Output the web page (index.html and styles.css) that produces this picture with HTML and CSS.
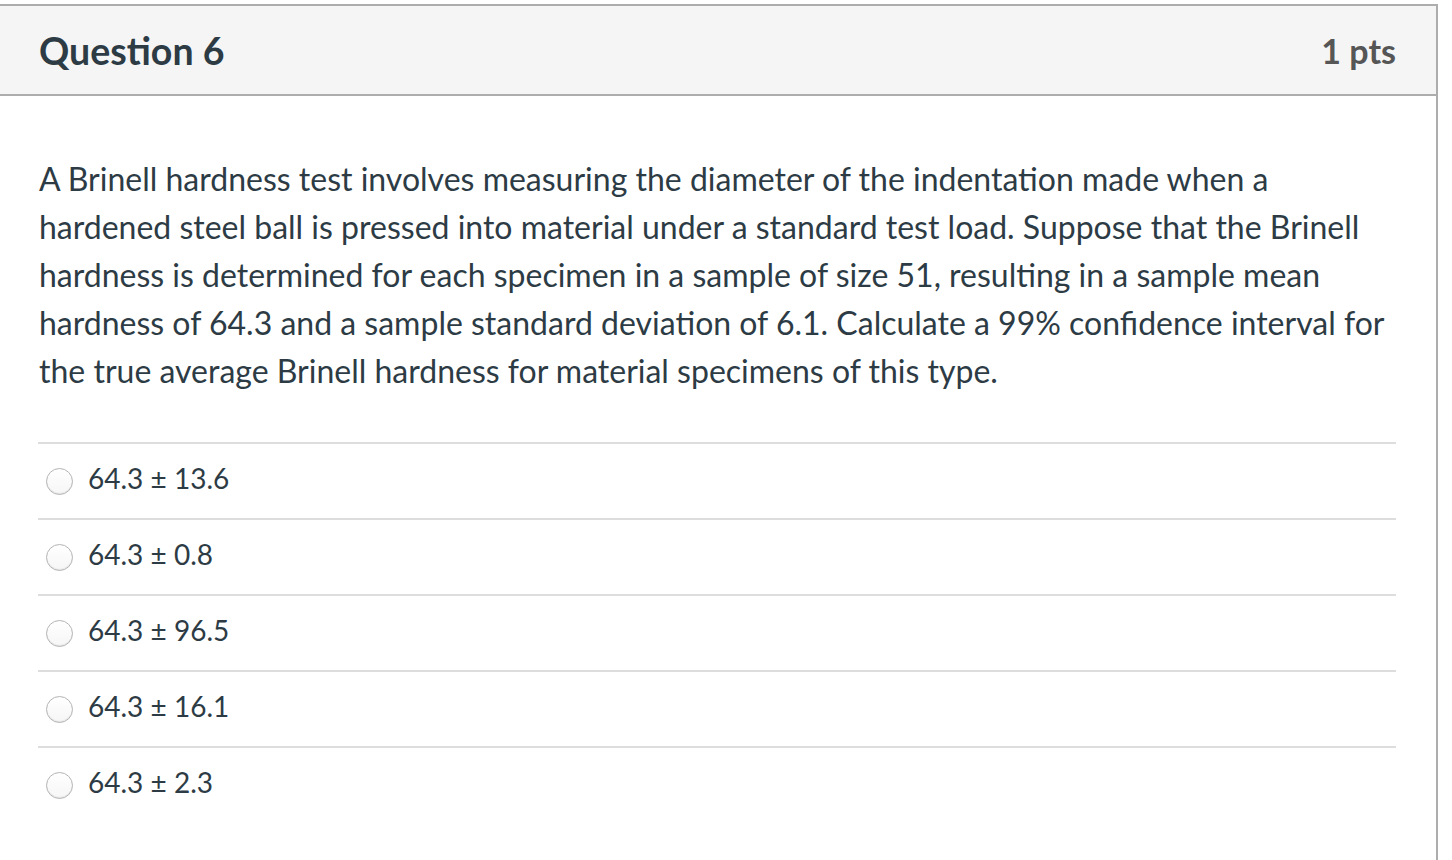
FILE: index.html
```html
<!DOCTYPE html>
<html>
<head>
<meta charset="utf-8">
<link rel="stylesheet" href="styles.css">
</head>
<body>
<div class="question">
  <div class="header">
    <h2 class="title">Question 6</h2>
    <span class="points">1 pts</span>
  </div>
  <div class="content">
    <p class="text">A Brinell hardness test involves measuring the diameter of the indentation made when a hardened steel ball is pressed into material under a standard test load. Suppose that the Brinell hardness is determined for each specimen in a sample of size 51, resulting in a sample mean hardness of 64.3 and a sample standard deviation of 6.1. Calculate a 99% confidence interval for the true average Brinell hardness for material specimens of this type.</p>
    <div class="answers">
      <label class="answer"><span class="radio"></span><span class="label">64.3 ± 13.6</span></label>
      <label class="answer"><span class="radio"></span><span class="label">64.3 ± 0.8</span></label>
      <label class="answer"><span class="radio"></span><span class="label">64.3 ± 96.5</span></label>
      <label class="answer"><span class="radio"></span><span class="label">64.3 ± 16.1</span></label>
      <label class="answer"><span class="radio"></span><span class="label">64.3 ± 2.3</span></label>
    </div>
  </div>
</div>
</body>
</html>
```
FILE: styles.css
```css
html, body {
  margin: 0;
  padding: 0;
  background: #ffffff;
}
body {
  padding-top: 4px;
  font-family: Lato, "Open Sans", sans-serif;
  color: #2d3b45;
  overflow: hidden;
  height: 860px;
  box-sizing: border-box;
}
.question {
  width: 1438px;
  box-sizing: border-box;
  border-top: 2px solid #adadad;
  border-right: 2px solid #adadad;
  min-height: 900px;
}
.header {
  display: flex;
  justify-content: space-between;
  align-items: center;
  height: 88px;
  padding: 0 40px 0 39px;
  background: #f5f5f5;
  border-bottom: 2px solid #adadad;
}
.title {
  margin: 0;
  font-size: 37.5px;
  font-weight: 700;
  color: #2d3b45;
}
.points {
  font-size: 34px;
  font-weight: 700;
  color: #565656;
}
.content {
  padding: 59px 40px 0 38px;
}
.text {
  margin: 0 0 0 1px;
  font-size: 32px;
  line-height: 48px;
}
.answers {
  margin-top: 47px;
}
.answer {
  display: flex;
  align-items: center;
  height: 74px;
  border-top: 2px solid #dddddd;
}
.radio {
  width: 25px;
  height: 25px;
  margin-left: 8px;
  margin-right: 15px;
  border-radius: 50%;
  border: 1px solid #b4b4b4;
  background: linear-gradient(#ffffff, #f6f6f6);
  box-shadow: inset 0 -1px 1px rgba(0,0,0,0.08);
}
.label {
  font-size: 28px;
  color: #2d3b45;
  padding-bottom: 6px;
}
```
